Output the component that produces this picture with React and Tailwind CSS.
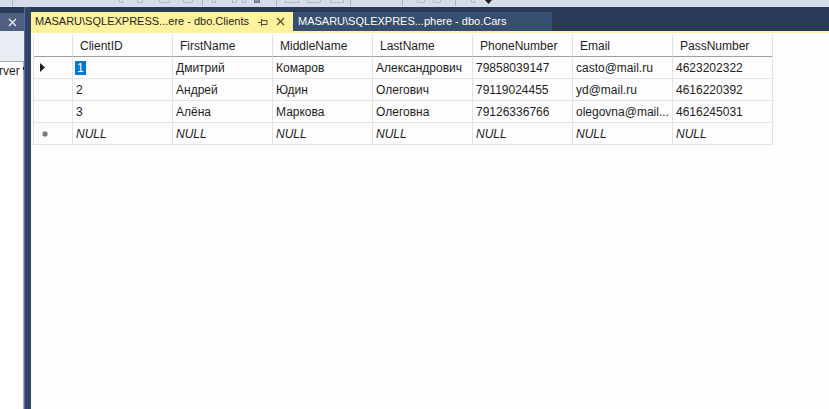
import React from 'react';

const font = { fontFamily: '"Liberation Sans", Arial, sans-serif' };

const columns = ['ClientID', 'FirstName', 'MiddleName', 'LastName', 'PhoneNumber', 'Email', 'PassNumber'];

const rows = [
  ['1', 'Дмитрий', 'Комаров', 'Александрович', '79858039147', 'casto@mail.ru', '4623202322'],
  ['2', 'Андрей', 'Юдин', 'Олегович', '79119024455', 'yd@mail.ru', '4616220392'],
  ['3', 'Алёна', 'Маркова', 'Олеговна', '79126336766', 'olegovna@mail...', '4616245031'],
];

function ToolbarStrip() {
  // only the bottom edge of the toolbar icons is visible
  const marks = [
    { x: 12, sep: true },
    { x: 119, w: 4 },
    { x: 137, w: 6 },
    { x: 159, w: 11 },
    { x: 183, w: 10 },
    { x: 202, sep: true },
    { x: 212, w: 4 },
    { x: 232, w: 5 },
    { x: 242, w: 4 },
    { x: 254, w: 6, dark: true },
    { x: 276, sep: true },
    { x: 285, w: 14 },
    { x: 307, w: 14 },
    { x: 330, w: 14 },
    { x: 350, sep: true },
    { x: 402, sep: true },
    { x: 417, w: 8 },
    { x: 433, w: 8 },
    { x: 455, sep: true },
    { x: 471, w: 4 },
  ];
  return (
    <div className="relative h-[7px] shrink-0 bg-[#d6dbe9]">
      {marks.map((m, i) =>
        m.sep ? (
          <div key={i} className="absolute top-0 h-[6px] w-px bg-[#a9b2c6]" style={{ left: m.x }} />
        ) : (
          <div
            key={i}
            className={`absolute top-0 h-[3px] border-b border-x ${m.dark ? 'border-[#6b7285] bg-[#8a91a3]' : 'border-[#b3bacb]'}`}
            style={{ left: m.x, width: m.w }}
          />
        )
      )}
      <svg className="absolute left-[485px] top-0" width="7" height="4" viewBox="0 0 7 4">
        <path d="M0 0h7L3.5 4z" fill="#1e1e1e" />
      </svg>
    </div>
  );
}

function LeftPanel() {
  return (
    <div className="w-[24px] shrink-0 flex flex-col">
      <div className="h-[6px] bg-[#293a56]" />
      <div className="h-[18px] bg-[#4d6082] flex items-center justify-center">
        <svg width="9" height="9" viewBox="0 0 9 9">
          <path d="M1 1l7 7M8 1L1 8" stroke="#e8ecf5" strokeWidth="1.4" />
        </svg>
      </div>
      <div className="h-[30px] bg-[#e9ecf3]" />
      <div className="flex-1 bg-white border-t border-r border-[#a7adb9] pt-[2px]">
        <div className="flex items-start text-[12px] leading-[14px] text-[#1e1e1e] -ml-[1px]" style={font}>
          <span>rver</span>
          <span className="ml-[3px] mt-[3px] h-[3px] w-px bg-[#1e1e1e]" />
        </div>
      </div>
    </div>
  );
}

function Tabs() {
  return (
    <div className="h-[24px] shrink-0 bg-[#293a56] pt-[5px] flex items-stretch text-[11px]" style={font}>
      <div className="w-[262px] bg-[#fff29d] flex items-center pl-[4px] text-[#1e1e1e]">
        <span className="flex-1 min-w-0 overflow-hidden whitespace-nowrap">MASARU\SQLEXPRESS...ere - dbo.Clients</span>
        <svg className="mr-[8px] shrink-0" width="10" height="8" viewBox="0 0 10 8">
          <path d="M0 4.5h3.5M3.5 1v7M3.5 2.5h5.5v4H3.5" stroke="#55502e" strokeWidth="1" fill="none" />
        </svg>
        <svg className="mr-[8px] shrink-0" width="9" height="9" viewBox="0 0 9 9">
          <path d="M1 1l7 7M8 1L1 8" stroke="#55502e" strokeWidth="1.3" />
        </svg>
      </div>
      <div className="w-[259px] bg-[#364e70] flex items-center pl-[5px] text-white">
        <span className="whitespace-nowrap">MASARU\SQLEXPRES...phere - dbo.Cars</span>
      </div>
    </div>
  );
}

function Cell({ children, header, italic, className = '' }) {
  return (
    <div
      className={`h-[22px] border-r border-b flex items-center whitespace-nowrap overflow-hidden ${
        header ? 'border-r-[#e3e3e3] border-b-[#a0a0a0] pl-[7px] pt-[1px]' : 'border-[#e3e3e3] pl-[3px]'
      } ${italic ? 'italic' : ''} ${className}`}
    >
      {children}
    </div>
  );
}

function Grid() {
  return (
    <div
      className="grid grid-cols-[39px_repeat(7,100px)] w-max border-l border-[#e3e3e3] text-[12px] text-[#1e1e1e]"
      style={font}
    >
      <Cell header />
      {columns.map((c) => (
        <Cell key={c} header>{c}</Cell>
      ))}
      {rows.map((r, ri) => (
        <React.Fragment key={ri}>
          <Cell className="pl-[6px]">
            {ri === 0 && (
              <svg width="5" height="9" viewBox="0 0 5 9">
                <path d="M0 0l5 4.5L0 9z" fill="#1e1e1e" />
              </svg>
            )}
          </Cell>
          {r.map((v, ci) => (
            <Cell key={ci}>
              {ri === 0 && ci === 0 ? (
                <span className="bg-[#0078d7] text-white leading-[14px] px-[2px] -ml-[1px]">{v}</span>
              ) : (
                v
              )}
            </Cell>
          ))}
        </React.Fragment>
      ))}
      <Cell className="pl-[8px]">
        <svg width="6" height="6" viewBox="0 0 6 6">
          <path d="M3 0v6M0 3h6M0.8 0.8l4.4 4.4M5.2 0.8L0.8 5.2" stroke="#6d6d6d" strokeWidth="1.1" />
        </svg>
      </Cell>
      {columns.map((c) => (
        <Cell key={c} italic>NULL</Cell>
      ))}
    </div>
  );
}

export default function App() {
  return (
    <div className="w-[829px] h-[409px] overflow-hidden flex flex-col bg-white">
      <ToolbarStrip />
      <div className="flex-1 flex min-h-0 bg-[#293a56]">
        <LeftPanel />
        <div className="w-[7px] shrink-0 bg-[#2f4467] border-l border-[#5a6e92]" />
        <div className="flex-1 flex flex-col min-w-0">
          <Tabs />
          <div className="h-[2px] shrink-0 bg-[#fff29d]" />
          <div className="flex-1 bg-[#fdfdfd] pt-[2px] pl-[2px]">
            <Grid />
          </div>
        </div>
      </div>
    </div>
  );
}
